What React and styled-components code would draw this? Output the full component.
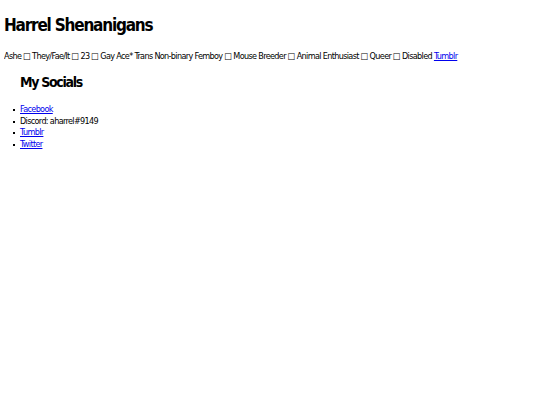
import React from 'react'
import styled, { createGlobalStyle } from 'styled-components'

const Global = createGlobalStyle`
  body {
    margin: 4px;
    background: #fff;
    color: #000;
    font-family: "DejaVu Sans", sans-serif;
    font-stretch: condensed;
    font-size: 9px;
    letter-spacing: -0.65px;
  }
`

const Title = styled.h1`
  margin: 10.5px 0 15px;
  font-size: 17px;
  line-height: 20px;
  letter-spacing: -1.2px;
  font-weight: bold;
`

const Tags = styled.p`
  margin: 0 0 12.5px;
  line-height: 12px;
`

const Link = styled.a`
  color: #00e;
  text-decoration: underline;
`

const Section = styled.section`
  padding-left: 16px;
`

const Heading = styled.h2`
  margin: 0 0 13px;
  font-size: 14px;
  line-height: 17px;
  letter-spacing: -1.3px;
  font-weight: bold;
`

const List = styled.ul`
  margin: 0;
  padding-left: 16px;
  list-style: none;
  line-height: 11.6px;
`

const Item = styled.li`
  position: relative;

  &::before {
    content: '';
    position: absolute;
    left: -7px;
    top: 5px;
    width: 2px;
    height: 2px;
    background: #000;
  }
`

const tags = [
  'Ashe',
  'They/Fae/It',
  '23',
  'Gay Ace* Trans Non-binary Femboy',
  'Mouse Breeder',
  'Animal Enthusiast',
  'Queer',
  'Disabled',
]

const socials = [
  { label: 'Facebook', href: '#' },
  { label: 'Discord: aharrel#9149' },
  { label: 'Tumblr', href: '#' },
  { label: 'Twitter', href: '#' },
]

const App = () => (
  <>
    <Global />
    <Title>Harrel Shenanigans</Title>
    <Tags>
      {tags.join(' \u25A1 ')} <Link href="#">Tumblr</Link>
    </Tags>
    <Section>
      <Heading>My Socials</Heading>
    </Section>
    <List>
      {socials.map(({ label, href }) => (
        <Item key={label}>{href ? <Link href={href}>{label}</Link> : label}</Item>
      ))}
    </List>
  </>
)

export default App
